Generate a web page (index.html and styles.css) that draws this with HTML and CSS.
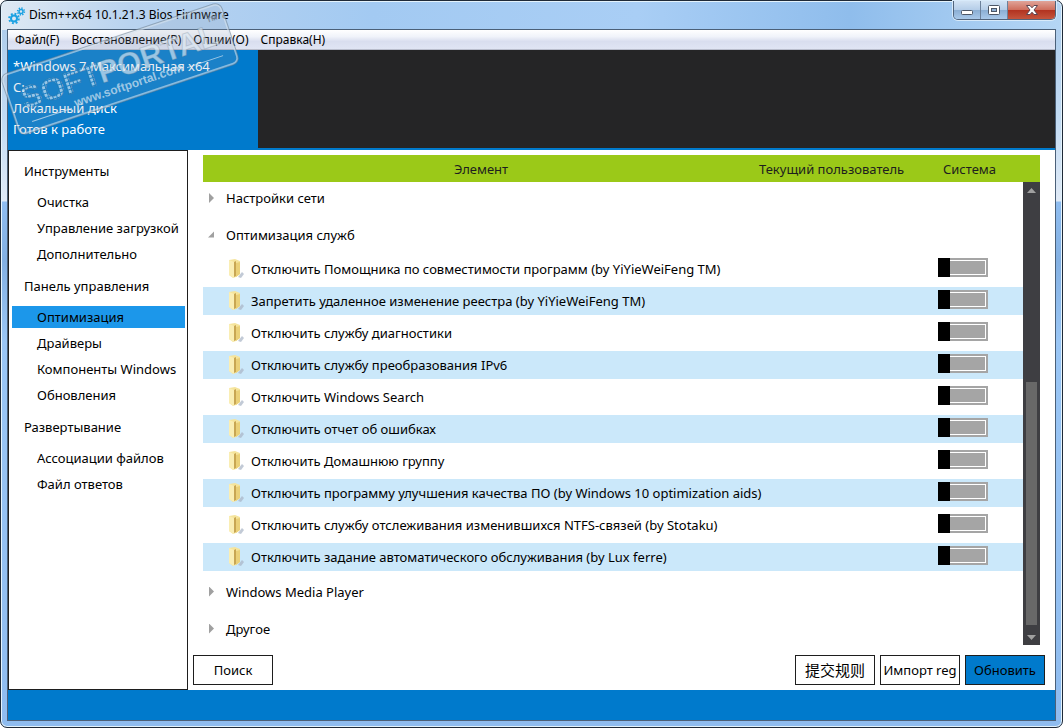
FILE: index.html
```html
<!DOCTYPE html>
<html lang="ru">
<head>
<meta charset="utf-8">
<title>Dism++x64 10.1.21.3 Bios Firmware</title>
<link rel="stylesheet" href="styles.css">
</head>
<body>
<div class="window">
  <header class="titlebar">
    <svg class="app-icon" width="18" height="18" viewBox="0 0 18 18" fill="none" stroke="#1ba1e2">
      <circle cx="6" cy="11.500" r="3" stroke-width="2"/>
      <circle cx="6" cy="11.500" r="4.800" stroke-width="2" stroke-dasharray="1.880 1.880"/>
      <circle cx="13" cy="4.500" r="2" stroke-width="1.500"/>
      <circle cx="13" cy="4.500" r="3.400" stroke-width="1.600" stroke-dasharray="1.330 1.330"/>
    </svg>
    <h1 class="title">Dism++x64 10.1.21.3 Bios Firmware</h1>
    <div class="caption">
      <button class="cap cap-min" aria-label="Свернуть"><svg width="14" height="12"><rect x="1.500" y="6.500" width="11" height="4" rx="1" fill="#fff" stroke="#4c5666"/></svg></button>
      <button class="cap" aria-label="Развернуть"><svg width="14" height="12"><rect x="1.500" y="1.500" width="11" height="9" rx="1" fill="#fff" stroke="#4c5666"/><rect x="4.500" y="4.500" width="5" height="3" fill="#8fb0d4" stroke="#4c5666"/></svg></button>
      <button class="cap cap-close" aria-label="Закрыть"><svg width="14" height="12"><path d="M1.500 1.500h3.500l2 2.300 2-2.300h3.500L9 6l3.500 4.500H9L7 8.200 5 10.500H1.500L5 6z" fill="#fff" stroke="#5b4450"/></svg></button>
    </div>
  </header>

  <div class="client">
    <nav class="menubar">
      <button>Файл(F)</button><button>Восстановление(R)</button><button>Опции(O)</button><button>Справка(H)</button>
    </nav>
    <section class="images">
      <div class="image-card">
        <p>*Windows 7 Максимальная x64</p><p>C:</p><p>Локальный диск</p><p>Готов к работе</p>
      </div>
    </section>

    <div class="workspace">
      <nav class="sidebar">
        <h2>Инструменты</h2>
        <ul>
          <li><a href="#">Очистка</a></li>
          <li><a href="#">Управление загрузкой</a></li>
          <li><a href="#">Дополнительно</a></li>
        </ul>
        <h2>Панель управления</h2>
        <ul>
          <li><a href="#" class="selected">Оптимизация</a></li>
          <li><a href="#">Драйверы</a></li>
          <li><a href="#">Компоненты Windows</a></li>
          <li><a href="#">Обновления</a></li>
        </ul>
        <h2>Развертывание</h2>
        <ul>
          <li><a href="#">Ассоциации файлов</a></li>
          <li><a href="#">Файл ответов</a></li>
        </ul>
      </nav>

      <main class="main">
        <div class="list">
          <table class="options">
            <colgroup><col><col class="col-user"><col class="col-system"></colgroup>
            <thead><tr><th>Элемент</th><th>Текущий пользователь</th><th>Система</th></tr></thead>
            <tbody>
              <tr class="group first"><td colspan="3"><button><span class="arrow"></span>Настройки сети</button></td></tr>
              <tr class="group"><td colspan="3"><button><span class="arrow open"></span>Оптимизация служб</button></td></tr>
              <tr class="item"><td><label for="o1">Отключить Помощника по совместимости программ (by YiYieWeiFeng TM)</label></td><td></td><td><input type="checkbox" id="o1"></td></tr>
              <tr class="item alt"><td><label for="o2">Запретить удаленное изменение реестра (by YiYieWeiFeng TM)</label></td><td></td><td><input type="checkbox" id="o2"></td></tr>
              <tr class="item"><td><label for="o3">Отключить службу диагностики</label></td><td></td><td><input type="checkbox" id="o3"></td></tr>
              <tr class="item alt"><td><label for="o4">Отключить службу преобразования IPv6</label></td><td></td><td><input type="checkbox" id="o4"></td></tr>
              <tr class="item"><td><label for="o5">Отключить Windows Search</label></td><td></td><td><input type="checkbox" id="o5"></td></tr>
              <tr class="item alt"><td><label for="o6">Отключить отчет об ошибках</label></td><td></td><td><input type="checkbox" id="o6"></td></tr>
              <tr class="item"><td><label for="o7">Отключить Домашнюю группу</label></td><td></td><td><input type="checkbox" id="o7"></td></tr>
              <tr class="item alt"><td><label for="o8">Отключить программу улучшения качества ПО (by Windows 10 optimization aids)</label></td><td></td><td><input type="checkbox" id="o8"></td></tr>
              <tr class="item"><td><label for="o9">Отключить службу отслеживания изменившихся NTFS-связей (by Stotaku)</label></td><td></td><td><input type="checkbox" id="o9"></td></tr>
              <tr class="item alt"><td><label for="o10">Отключить задание автоматического обслуживания (by Lux ferre)</label></td><td></td><td><input type="checkbox" id="o10"></td></tr>
              <tr class="group"><td colspan="3"><button><span class="arrow"></span>Windows Media Player</button></td></tr>
              <tr class="group"><td colspan="3"><button><span class="arrow"></span>Другое</button></td></tr>
            </tbody>
          </table>
          <div class="scrollbar">
            <svg width="9" height="5"><path d="M0 5L4.500 0 9 5z" fill="#a0a0a0"/></svg>
            <div class="track"><div class="thumb"></div></div>
            <svg width="9" height="5"><path d="M0 0h9L4.500 5z" fill="#a0a0a0"/></svg>
          </div>
        </div>
        <footer class="actions">
          <button class="btn search">Поиск</button>
          <button class="btn cjk" lang="zh">提交规则</button>
          <button class="btn">Импорт reg</button>
          <button class="btn primary">Обновить</button>
        </footer>
      </main>
    </div>
    <div class="statusbar"></div>
  </div>

  <svg class="watermark" width="244" height="140" viewBox="0 0 244 140">
    <defs>
      <pattern id="dots" width="4" height="4" patternUnits="userSpaceOnUse"><rect width="3" height="3" fill="#dcebf7"/></pattern>
    </defs>
    <g transform="translate(120 69) rotate(-18.500)">
      <rect x="-115" y="-31" width="230" height="62" rx="6" fill="#8fa3b5" fill-opacity=".18" stroke="#d5e3ef" stroke-opacity=".6" stroke-width="2"/>
      <rect x="-116" y="-32" width="232" height="64" rx="7" fill="none" stroke="#5f7486" stroke-opacity=".5"/>
      <g class="wm-word">
        <text class="wm-soft" x="-103" y="8" fill="url(#dots)">SOFT</text>
        <text class="wm-portal" x="-22" y="8">PORTAL</text>
      </g>
      <text class="wm-tm" x="98" y="-16">TM</text>
      <text class="wm-url" x="-54" y="22">www.softportal.com</text>
      <path d="M-100 22h42M64 20h38" stroke="#dce8f2" stroke-opacity=".7"/>
    </g>
  </svg>
</div>
</body>
</html>
```

FILE: styles.css
```css
* { box-sizing: border-box; }

body {
  margin: 0;
  background: #fff;
  color: #000;
  font: 13px/20px "Noto Sans", "Open Sans", sans-serif;
}

h1, h2, p, ul { margin: 0; padding: 0; font: inherit; }
ul { list-style: none; }
a { color: inherit; text-decoration: none; }
button { margin: 0; padding: 0; border: 0; background: none; color: inherit; font: inherit; }

.window {
  position: relative;
  display: flex;
  flex-direction: column;
  min-height: 100vh;
  padding: 0 6px;
  border: 1px solid #1f2a38;
  border-bottom-width: 1px;
  border-radius: 7px;
  box-shadow: inset 0 0 0 1px #e4f3fc;
  background:
    linear-gradient(90deg, #dfe9f3 0, #b9d3ef 12%, #a3caf2 35%, #a9cef5 60%, #8fbdec 80%, #b5d6f5 100%) 0 0 / 100% 29px no-repeat,
    linear-gradient(180deg, #a9c9ea 0, #c3dcf4 120px, #e0eaf6 200px, #8fbdf0 201px, #83b0e2 260px, #9ac6f5 340px, #8fbcef 100%);
}

.titlebar { display: flex; height: 28px; padding-left: 1px; }
.app-icon { margin-top: 6px; }
.title { flex: 1; margin-left: 3px; padding-top: 4px; font-size: 12px; }

.caption {
  display: flex;
  height: 19px;
  border: 1px solid #51647c;
  border-top: 0;
  border-radius: 0 0 5px 5px;
  box-shadow: 0 0 0 1px #d8eafa;
  overflow: hidden;
}
.cap {
  display: flex;
  align-items: center;
  justify-content: center;
  width: 27px;
  border-right: 1px solid #6c819b;
  background: linear-gradient(#d3e3f4 0, #b4cde8 50%, #8baed3 51%, #a9c9ea 100%);
}
.cap-close {
  width: 47px;
  border-right: 0;
  background: linear-gradient(#e0a499 0, #cf6f5e 48%, #b23320 52%, #c4553d 100%);
}

.client {
  flex: 1;
  display: flex;
  flex-direction: column;
  margin-bottom: 6px;
  border: 1px solid #4b6078;
  background: #fff;
}

.menubar {
  display: flex;
  gap: 12px;
  height: 20px;
  padding-left: 7px;
  background: linear-gradient(#fff 0, #f0f3fa 35%, #d9deef 60%, #e0e5f4 100%);
  border-bottom: 1px solid #b8bccb;
  font-size: 12px;
}

.images { height: 100px; border-bottom: 2px solid #007acc; background: #252526; }
.image-card {
  width: 250px;
  height: 98px;
  padding: 6px 5px 0;
  background: #007acc;
  color: #fff;
}
.image-card p { line-height: 21px; }

.workspace { flex: 1; display: flex; }

.sidebar {
  width: 180px;
  padding: 1px 2px 0 3px;
  border: 1px solid #1e1e1e;
}
.sidebar h2 { margin: 6px 0 5px; padding-left: 12px; line-height: 26px; }
.sidebar a {
  display: block;
  margin: 2px 0;
  padding-left: 25px;
  line-height: 22px;
}
.sidebar li { display: flow-root; }
.sidebar .selected { background: #1c97ea; }

.main { flex: 1; display: flex; flex-direction: column; padding: 5px 10px 5px 5px; }

.list { position: relative; flex: 1; margin: 0 5px 0 10px; }
.options { width: 100%; table-layout: fixed; border-collapse: separate; border-spacing: 0; }
.col-user { width: 140px; }
.col-system { width: 141px; }
.options th {
  height: 27px;
  padding: 0;
  background: #9bc918;
  color: #1e1e1e;
  font-weight: normal;
  white-space: nowrap;
}
.options td { padding: 0; }

.group td { height: 37px; }
.group.first td { height: 34px; padding-bottom: 2px; }
.group button { display: flex; align-items: center; }
.arrow {
  width: 23px;
  height: 10px;
  background: #a0a0a0;
  clip-path: polygon(6px 0, 11px 5px, 6px 10px);
}
.arrow.open { clip-path: polygon(11px 2px, 11px 8px, 5px 8px); }

.item td {
  height: 32px;
  border: 2px solid transparent;
  border-width: 2px 0;
  background-clip: padding-box;
}
.item.alt td { background-color: #cbe8fa; }
.item label {
  display: block;
  padding-left: 48px;
  white-space: nowrap;
}
.item td:first-child {
  background-repeat: no-repeat;
  background-position: 25px 4px;
  background-image: url("data:image/svg+xml,%3Csvg xmlns='http://www.w3.org/2000/svg' width='18' height='20'%3E%3Cpath d='M10 18l4-5 2 2-3 4z' fill='%23a8b4c4' fill-opacity='.7'/%3E%3Cpath d='M1 1l6-1 5 2v13l-4 3-3 1-4-3z' fill='%23f5e49c'/%3E%3Cpath d='M1 1l5 2v16l-5-3z' fill='%23faeeb4'/%3E%3Cpath d='M6 3l2-1v15l-2 1z' fill='%23c8a653'/%3E%3Cpath d='M8 4l4-1v12l-4 3z' fill='%23ead078'/%3E%3C/svg%3E");
}

.item input {
  display: block;
  appearance: none;
  width: 50px;
  height: 19px;
  margin: 0 0 4px 39px;
  background:
    linear-gradient(#000, #000) 0 0 / 12px 100% no-repeat,
    linear-gradient(#a5a5a5, #a5a5a5) 3px 3px / 44px 13px no-repeat,
    linear-gradient(#fff, #fff) 2px 2px / 46px 15px no-repeat,
    #a5a5a5;
}

.scrollbar {
  position: absolute;
  top: 27px;
  right: 0;
  bottom: 5px;
  display: flex;
  flex-direction: column;
  align-items: center;
  width: 17px;
  padding: 6px 3px 5px;
  background: #3e3e42;
}
.track { flex: 1; width: 100%; display: flex; flex-direction: column; justify-content: flex-end; padding: 6px 0 10px; }
.thumb { height: 57%; background: #686868; }

.actions { display: flex; gap: 5px; margin-top: 5px; }
.btn { width: 80px; height: 30px; border: 1px solid #1e1e1e; background: #fff; white-space: nowrap; }
.search { margin-right: auto; }
.cjk { font: 15px/20px "Noto Sans CJK SC", sans-serif; }
.primary { background: #007acc; }

.statusbar { height: 30px; background: #007acc; }

.watermark { position: absolute; top: -1px; left: -1px; pointer-events: none; }
.wm-word { font: bold 31px "Liberation Sans", sans-serif; stroke: #50667a; stroke-opacity: .35; stroke-width: 1px; opacity: .65; }
.wm-portal { fill: #dfeaf3; }
.wm-tm { font: bold 7px "Liberation Sans", sans-serif; fill: #7c8ea0; }
.wm-url { font: bold 12px "Liberation Sans", sans-serif; fill: #d8e6f2; fill-opacity: .7; }
```
